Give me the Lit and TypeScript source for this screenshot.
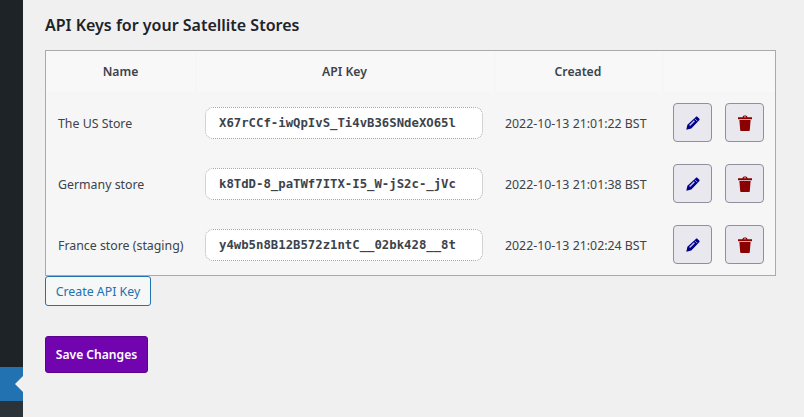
import { LitElement, html, css, svg } from "lit";
import { customElement } from "lit/decorators.js";

const rows = [
  ["The US Store", "X67rCCf-iwQpIvS_Ti4vB36SNdeXO65l", "2022-10-13 21:01:22 BST"],
  ["Germany store", "k8TdD-8_paTWf7ITX-I5_W-jS2c-_jVc", "2022-10-13 21:01:38 BST"],
  ["France store (staging)", "y4wb5n8B12B572z1ntC__02bk428__8t", "2022-10-13 21:02:24 BST"],
];

const pencil = svg`<svg viewBox="0 0 14 14" width="14" height="14"><path fill="#00008b" d="M0.300 13.700 1.400 8.700 9.800 .900C10.300 .400 11 .400 11.500 .900L13.200 2.600C13.700 3.100 13.700 3.800 13.200 4.300L5.300 12.600z"/><path stroke="#c4c4e4" stroke-width="1.400" fill="none" d="M3.600 9.600 8.400 4.800"/><path stroke="#c4c4e4" stroke-width=".8" fill="none" d="M8.800 2.700 11.300 5.200"/></svg>`;
const trash = svg`<svg viewBox="0 0 14 16" width="14" height="16"><path fill="#8b0000" d="M4.500 2.300C4.600 .9 5.500 .4 7 .4s2.400 .5 2.500 1.900H14V4.200H0V2.300zM5.700 2.300H8.300C8.200 1.600 7.800 1.400 7 1.400S5.800 1.600 5.700 2.300zM1.400 5H12.600L11.800 15.200C11.800 15.700 11.400 16 11 16H3C2.600 16 2.200 15.700 2.200 15.200z"/></svg>`;

@customElement("app-root")
export class AppRoot extends LitElement {
  static styles = css`
    :host { display: block; height: 417px; width: 804px; overflow: hidden; background: #f0f0f1; font-family: "Noto Sans", sans-serif; color: #3c434a; font-size: 13px; }
    .page { display: flex; height: 417px; }
    .side { width: 23px; flex: none; background: #1d2327; display: flex; flex-direction: column; }
    .side .sp { height: 367px; }
    .side .cur { height: 34px; background: #2271b1; display: flex; align-items: center; justify-content: flex-end; }
    .side .cur i { width: 0; height: 0; border: 8px solid transparent; border-right-color: #f0f0f1; border-left-width: 0; }
    .side .sub { flex: 1; background: #2c3338; }
    .main { flex: none; width: 731px; margin-left: 22px; }
    h2 { margin: 0; padding-top: 14px; height: 50px; box-sizing: border-box; font-size: 16px; font-weight: 600; line-height: 22px; color: #1d2327; }
    table { width: 731px; box-sizing: border-box; border: 1px solid #aaa; border-collapse: separate; border-spacing: 0; background: #f6f6f6; table-layout: fixed; }
    th { height: 41px; padding: 0; background: #f8f8f8; font-weight: 600; font-size: 12.200px; color: #3c434a; text-align: center; }
    th + th { box-shadow: inset 2px 0 0 #f6f6f6; }
    td { height: 61px; padding: 0; font-size: 12.350px; vertical-align: middle; }
    td.name { padding: 1px 0 0 12px; box-sizing: border-box; white-space: nowrap; }
    td.created { padding: 1px 0 0 11px; box-sizing: border-box; white-space: nowrap; }
    .key { display: flex; align-items: center; box-sizing: border-box; width: 278px; height: 32px; margin: 1px 0 0 10px; padding-left: 13px; background: #fff; border: 1px dotted #a8a8a8; border-radius: 8px; font-family: "DejaVu Sans Mono", monospace; font-weight: 700; font-size: 12.300px; white-space: nowrap; overflow: hidden; }
    .acts { display: flex; gap: 13px; padding-left: 11px; }
    button.ib { width: 39px; height: 39px; padding: 0; display: flex; align-items: center; justify-content: center; background: #e8e8ee; border: 1px solid #8f8f9d; border-radius: 4px; }
    .create { display: block; margin-top: 0; box-sizing: border-box; width: 106px; height: 30px; padding: 0; background: #f6f7f7; border: 1px solid #2271b1; border-radius: 3px; color: #2271b1; font: 400 12.350px "Noto Sans", sans-serif; }
    .save { display: block; margin-top: 30px; box-sizing: border-box; width: 103px; height: 37px; padding: 0; background: #7204b0; border: 1px solid #5c038e; border-radius: 3px; color: #fff; font: 600 12.100px "Noto Sans", sans-serif; }
  `;

  render() {
    return html`<div class="page">
      <div class="side"><div class="sp"></div><div class="cur"><i></i></div><div class="sub"></div></div>
      <div class="main">
        <h2>API Keys for your Satellite Stores</h2>
        <table>
          <colgroup><col style="width:149px" /><col style="width:299px" /><col style="width:168px" /><col /></colgroup>
          <thead><tr><th>Name</th><th>API Key</th><th>Created</th><th></th></tr></thead>
          <tbody>
            ${rows.map(r => html`<tr>
              <td class="name">${r[0]}</td>
              <td><div class="key">${r[1]}</div></td>
              <td class="created">${r[2]}</td>
              <td><div class="acts"><button class="ib">${pencil}</button><button class="ib">${trash}</button></div></td>
            </tr>`)}
          </tbody>
        </table>
        <button class="create">Create API Key</button>
        <button class="save">Save Changes</button>
      </div>
    </div>`;
  }
}
